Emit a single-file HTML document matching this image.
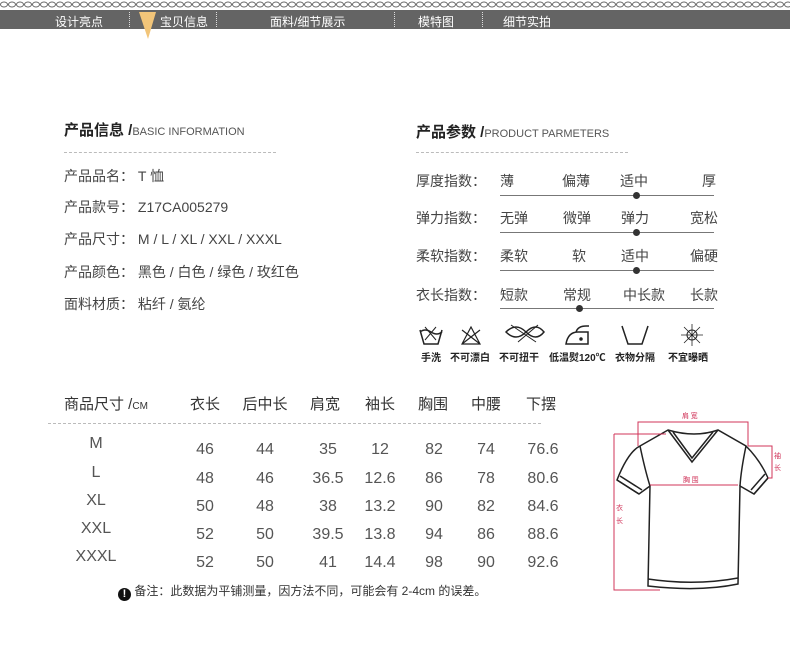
<!DOCTYPE html>
<html><head><meta charset="utf-8"><style>
body{margin:0;width:790px;height:649px;background:#fff;position:relative;overflow:hidden;font-family:"Liberation Sans","Noto Sans CJK SC",sans-serif;color:#444}
.a{position:absolute;white-space:nowrap;line-height:1}
.nav{position:absolute;left:0;top:10px;width:790px;height:19px;background:#646464}
.nav span{position:absolute;top:3px;color:#fff;font-size:12px}
.sep{position:absolute;top:2px;height:15px;border-left:1px dotted #ddd}
.t{font-size:15px;font-weight:bold;color:#222}
.t small{font-size:11px;font-weight:normal;color:#555}
.dash{position:absolute;border-top:1px dashed #bbb;height:0}
.r{font-size:14px;color:#444}
.ln{position:absolute;height:1px;background:#777}
.dot{position:absolute;width:7px;height:7px;border-radius:50%;background:#333}
.c{position:absolute;font-size:15px;color:#555;transform:translateX(-50%);white-space:nowrap;line-height:1}
.ic{position:absolute;font-size:10px;font-weight:bold;color:#222}
</style></head><body>
<svg class="a" style="left:0;top:0" width="790" height="9"><defs><pattern id="p" width="8" height="9" patternUnits="userSpaceOnUse"><ellipse cx="4" cy="4.5" rx="3.5" ry="2.5" fill="none" stroke="#666" stroke-width="1"/></pattern></defs><rect width="790" height="9" fill="url(#p)"/></svg>
<div class="nav">
<span style="left:55px">设计亮点</span><div class="sep" style="left:129px"></div>
<span style="left:160px">宝贝信息</span><div class="sep" style="left:216px"></div>
<span style="left:270px">面料/细节展示</span><div class="sep" style="left:394px"></div>
<span style="left:418px">模特图</span><div class="sep" style="left:482px"></div>
<span style="left:503px">细节实拍</span>
</div>
<svg class="a" style="left:137px;top:10px" width="22" height="30"><polygon points="2,2 19,2 11,29" fill="#f2c579"/></svg>

<div class="a t" style="left:64px;top:123px">产品信息 /<small>BASIC INFORMATION</small></div>
<div class="dash" style="left:64px;top:152px;width:212px"></div>
<div class="a r" style="left:64px;top:169px">产品品名：&nbsp;T 恤</div>
<div class="a r" style="left:64px;top:200px">产品款号：&nbsp;Z17CA005279</div>
<div class="a r" style="left:64px;top:232px">产品尺寸：&nbsp;M / L / XL / XXL / XXXL</div>
<div class="a r" style="left:64px;top:265px">产品颜色：&nbsp;黑色 / 白色 / 绿色 / 玫红色</div>
<div class="a r" style="left:64px;top:297px">面料材质：&nbsp;粘纤 / 氨纶</div>

<div class="a t" style="left:416px;top:125px">产品参数 /<small>PRODUCT PARMETERS</small></div>
<div class="dash" style="left:416px;top:152px;width:212px"></div>

<div class="a r" style="left:416px;top:174px">厚度指数：</div>
<div class="a r" style="left:500px;top:174px">薄</div><div class="a r" style="left:562px;top:174px">偏薄</div><div class="a r" style="left:620px;top:174px">适中</div><div class="a r" style="left:702px;top:174px">厚</div>
<div class="ln" style="left:500px;top:195px;width:214px"></div><div class="dot" style="left:633px;top:192px"></div>

<div class="a r" style="left:416px;top:211px">弹力指数：</div>
<div class="a r" style="left:500px;top:211px">无弹</div><div class="a r" style="left:563px;top:211px">微弹</div><div class="a r" style="left:621px;top:211px">弹力</div><div class="a r" style="left:690px;top:211px">宽松</div>
<div class="ln" style="left:500px;top:232px;width:214px"></div><div class="dot" style="left:633px;top:229px"></div>

<div class="a r" style="left:416px;top:249px">柔软指数：</div>
<div class="a r" style="left:500px;top:249px">柔软</div><div class="a r" style="left:572px;top:249px">软</div><div class="a r" style="left:621px;top:249px">适中</div><div class="a r" style="left:690px;top:249px">偏硬</div>
<div class="ln" style="left:500px;top:270px;width:214px"></div><div class="dot" style="left:633px;top:267px"></div>

<div class="a r" style="left:416px;top:288px">衣长指数：</div>
<div class="a r" style="left:500px;top:288px">短款</div><div class="a r" style="left:563px;top:288px">常规</div><div class="a r" style="left:623px;top:288px">中长款</div><div class="a r" style="left:690px;top:288px">长款</div>
<div class="ln" style="left:500px;top:308px;width:214px"></div><div class="dot" style="left:576px;top:305px"></div>

<svg class="a" style="left:416px;top:322px" width="310" height="28" fill="none" stroke="#222" stroke-width="1.5">
<path d="M4 8 L8 22 H22 L26 8 M4 10 Q9 6 15 10 Q21 14 26 10"/><path d="M9 5 L20 18 M20 5 L9 18" stroke-width="1"/>
<path d="M46 22 L55 5 L64 22 Z M46 8 L64 22 M64 8 L46 22" stroke-width="1.2"/>
<path d="M90 10 Q100 0 110 10 Q120 20 128 10 Q120 0 110 10 Q100 20 90 10 Z"/><path d="M95 3 L120 20 M102 20 L122 3" stroke-width="1"/>
<path d="M150 22 Q152 10 162 10 H172 V22 Z M160 10 Q162 4 170 4 H173"/><circle cx="165" cy="17" r="1" fill="#222"/>
<path d="M206 4 L212 22 H226 L232 4"/>
<circle cx="276" cy="13" r="5" stroke-width="1"/><path d="M268 5 L284 21 M284 5 L268 21 M276 2 V24 M265 13 H287" stroke-width="0.8"/>
</svg>
<div class="ic" style="left:421px;top:349px">手洗</div>
<div class="ic" style="left:450px;top:349px">不可漂白</div>
<div class="ic" style="left:499px;top:349px">不可扭干</div>
<div class="ic" style="left:549px;top:349px">低温熨120℃</div>
<div class="ic" style="left:615px;top:349px">衣物分隔</div>
<div class="ic" style="left:668px;top:349px">不宜曝晒</div>

<div class="a" style="left:64px;top:397px;font-size:15px;color:#333">商品尺寸 /<span style="font-size:10px">CM</span></div>
<div class="c" style="left:205px;top:397px;color:#333">衣长</div><div class="c" style="left:265px;top:397px;color:#333">后中长</div><div class="c" style="left:325px;top:397px;color:#333">肩宽</div><div class="c" style="left:380px;top:397px;color:#333">袖长</div><div class="c" style="left:433px;top:397px;color:#333">胸围</div><div class="c" style="left:486px;top:397px;color:#333">中腰</div><div class="c" style="left:541px;top:397px;color:#333">下摆</div>
<div class="dash" style="left:48px;top:423px;width:493px"></div>

<div class="c" style="left:96px;top:436px;font-size:16px">M</div><div class="c" style="left:96px;top:465px;font-size:16px">L</div><div class="c" style="left:96px;top:493px;font-size:16px">XL</div><div class="c" style="left:96px;top:521px;font-size:16px">XXL</div><div class="c" style="left:96px;top:549px;font-size:16px">XXXL</div>

<div class="c" style="left:205px;top:442px;font-size:16px">46</div><div class="c" style="left:265px;top:442px;font-size:16px">44</div><div class="c" style="left:328px;top:442px;font-size:16px">35</div><div class="c" style="left:380px;top:442px;font-size:16px">12</div><div class="c" style="left:434px;top:442px;font-size:16px">82</div><div class="c" style="left:486px;top:442px;font-size:16px">74</div><div class="c" style="left:543px;top:442px;font-size:16px">76.6</div>
<div class="c" style="left:205px;top:471px;font-size:16px">48</div><div class="c" style="left:265px;top:471px;font-size:16px">46</div><div class="c" style="left:328px;top:471px;font-size:16px">36.5</div><div class="c" style="left:380px;top:471px;font-size:16px">12.6</div><div class="c" style="left:434px;top:471px;font-size:16px">86</div><div class="c" style="left:486px;top:471px;font-size:16px">78</div><div class="c" style="left:543px;top:471px;font-size:16px">80.6</div>
<div class="c" style="left:205px;top:499px;font-size:16px">50</div><div class="c" style="left:265px;top:499px;font-size:16px">48</div><div class="c" style="left:328px;top:499px;font-size:16px">38</div><div class="c" style="left:380px;top:499px;font-size:16px">13.2</div><div class="c" style="left:434px;top:499px;font-size:16px">90</div><div class="c" style="left:486px;top:499px;font-size:16px">82</div><div class="c" style="left:543px;top:499px;font-size:16px">84.6</div>
<div class="c" style="left:205px;top:527px;font-size:16px">52</div><div class="c" style="left:265px;top:527px;font-size:16px">50</div><div class="c" style="left:328px;top:527px;font-size:16px">39.5</div><div class="c" style="left:380px;top:527px;font-size:16px">13.8</div><div class="c" style="left:434px;top:527px;font-size:16px">94</div><div class="c" style="left:486px;top:527px;font-size:16px">86</div><div class="c" style="left:543px;top:527px;font-size:16px">88.6</div>
<div class="c" style="left:205px;top:555px;font-size:16px">52</div><div class="c" style="left:265px;top:555px;font-size:16px">50</div><div class="c" style="left:328px;top:555px;font-size:16px">41</div><div class="c" style="left:380px;top:555px;font-size:16px">14.4</div><div class="c" style="left:434px;top:555px;font-size:16px">98</div><div class="c" style="left:486px;top:555px;font-size:16px">90</div><div class="c" style="left:543px;top:555px;font-size:16px">92.6</div>

<div class="a" style="left:118px;top:585px;font-size:12px;color:#333"><span style="display:inline-block;width:13px;height:13px;border-radius:50%;background:#111;color:#fff;text-align:center;font-weight:bold;font-size:11px;line-height:13px;vertical-align:-2px">!</span> 备注：此数据为平铺测量，因方法不同，可能会有 2-4cm 的误差。</div>

<svg class="a" style="left:600px;top:400px" width="190" height="200">
<g fill="none" stroke="#222" stroke-width="1.5">
<path d="M68 30 Q95 38 118 30 L146 46 Q160 60 168 78 L154 94 L140 86 L138 184 Q100 192 48 186 L50 86 L39 94 L17 80 Q28 52 40 46 Z"/>
<path d="M68 30 L92 62 L118 30 M73 32 L92 58 L113 32"/>
<path d="M17 80 L39 94 M20 76 L42 90 M168 78 L154 94 M165 74 L151 90"/>
<path d="M48 179 Q95 186 138 178"/>
<path d="M40 46 Q45 70 50 86 M146 46 Q141 70 140 86"/>
</g>
<g fill="none" stroke="#d0345a" stroke-width="1">
<path d="M38 46 V22 H148 V46 M14 34 H66 M14 34 V190 H60 M148 46 H172 V78 H168 M50 85 H138"/>
</g>
<g fill="#d0345a" font-size="7" font-family="Noto Sans CJK SC,sans-serif">
<text x="82" y="18">肩 宽</text><text x="83" y="82">胸 围</text><text x="174" y="58">袖</text><text x="174" y="70">长</text><text x="16" y="110">衣</text><text x="16" y="123">长</text>
</g>
</svg>
</body></html>
